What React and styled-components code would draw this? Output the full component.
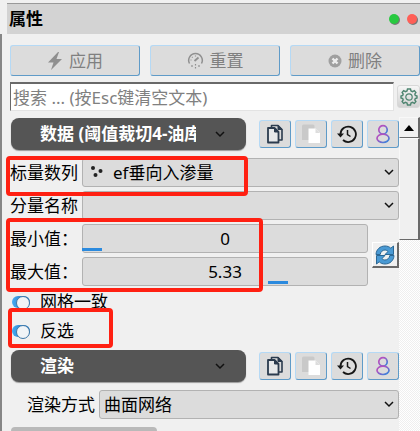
import React, { useState } from "react";
import styled, { createGlobalStyle } from "styled-components";

const GlobalStyle = createGlobalStyle`
  * {
    box-sizing: border-box;
  }

  html,
  body,
  #root {
    height: 100%;
  }

  body {
    margin: 0;
    overflow: hidden;
    background: #f0f0f0;
    color: #000;
    font-family: "Noto Sans", "Noto Sans CJK SC", sans-serif;
    font-size: 17px;
    line-height: 24px;
  }

  button,
  input,
  select {
    font: inherit;
    color: inherit;
  }
`;

const Dock = styled.main`
  display: flex;
  flex-direction: column;
  height: 100%;
  padding-top: 3px;
`;

const TitleBar = styled.header`
  display: flex;
  align-items: center;
  flex: none;
  height: 31px;
  margin-left: 7px;
  padding: 0 3px 0 2px;
  border-top: 1px solid #999;
  background: #d3d3d3;
`;

const Title = styled.h1`
  flex: 1;
  margin: 0;
  font-size: 17px;
  font-weight: bold;
`;

const WindowButton = styled.button`
  width: 10px;
  height: 10px;
  margin-left: 8px;
  padding: 0;
  border: none;
  border-radius: 50%;
  background: ${(props) => props.$color};
  box-shadow: 1px 1px 0 #777;
`;

const Frame = styled.div`
  display: flex;
  flex-direction: column;
  flex: 1;
  min-height: 0;
  padding-top: 11px;
  border-left: 2px solid #868686;
`;

const Actions = styled.div`
  display: flex;
  flex: none;
  gap: 10px;
  margin-left: 8px;
`;

const RaisedButton = styled.button`
  display: flex;
  align-items: center;
  justify-content: center;
  padding: 0;
  border: 1px solid;
  border-color: #b5d9f5 #5f9bc8 #5f9bc8 #b5d9f5;
  border-radius: 3px;
  background: #dcdcdc;
`;

const ActionButton = styled(RaisedButton)`
  flex: 1;
  gap: 6px;
  height: 31px;
  color: #808080;
`;

const SearchRow = styled.div`
  display: flex;
  align-items: center;
  flex: none;
  gap: 3px;
  margin: 6px 0 0 8px;
`;

const SearchInput = styled.input`
  flex: 1;
  min-width: 0;
  height: 29px;
  padding: 0 2px;
  border: 1px solid #e3e3e3;
  border-top: 2px solid #696969;
  border-left: 1px solid #696969;
  background: #fff;

  &::placeholder {
    color: #808080;
    opacity: 1;
  }
`;

const GearButton = styled.button`
  display: flex;
  align-items: center;
  justify-content: center;
  width: 23px;
  height: 23px;
  padding: 0;
  border: 1px solid #d8d8d8;
  border-radius: 3px;
  background: linear-gradient(#f6f6f6, #d2d2d2);
`;

const ScrollArea = styled.div`
  display: flex;
  flex: 1;
  min-height: 0;
  margin-top: 6px;
`;

const Content = styled.div`
  flex: 1;
  min-width: 0;
  padding-left: 8px;
  overflow: hidden;
`;

const ScrollBar = styled.div`
  display: flex;
  flex-direction: column;
  width: 21px;
  background: repeating-conic-gradient(#fff 0% 25%, #efefef 0% 50%) 0 0 / 2px 2px;
`;

const ScrollPart = styled.button`
  display: flex;
  align-items: center;
  justify-content: center;
  flex: none;
  height: ${(props) => props.$height}px;
  padding: 0;
  border: 1px solid;
  border-color: #f8f8f8 #696969 #696969 #f8f8f8;
  border-right-width: 2px;
  background: #f0f0f0;
`;

const SectionBar = styled.div`
  display: flex;
  align-items: center;
  gap: 4px;
  height: 34px;
`;

const SectionToggle = styled.button`
  display: flex;
  align-items: center;
  flex: 1;
  min-width: 0;
  height: 32px;
  margin: 0 9px 0 1px;
  padding: 0 20px 0 29px;
  border: none;
  border-radius: 8px;
  background: #555;
  box-shadow: 0 1px 1px #999;
  color: #fff;
  font-weight: bold;
  text-align: left;
`;

const SectionName = styled.span`
  flex: 1;
  margin-right: 18px;
  overflow: hidden;
  white-space: nowrap;
`;

const ToolButton = styled(RaisedButton)`
  flex: none;
  width: 32px;
  height: 28px;
`;

const Rows = styled.div`
  display: flex;
  flex-direction: column;
  gap: 4px;
  padding-top: 7px;
`;

const Row = styled.div`
  position: relative;
  display: flex;
  align-items: center;
  height: 29px;
  padding-left: ${(props) => props.$indent || 0}px;
`;

const Label = styled.label`
  flex: none;
  width: 72px;
  white-space: nowrap;
`;

const SelectBox = styled.div`
  position: relative;
  flex: 1;
  min-width: 0;
  height: 29px;
`;

const Select = styled.select`
  width: 100%;
  height: 100%;
  padding: 0 24px 0 ${(props) => props.$left}px;
  border: 1px solid #b2b2b2;
  border-radius: 3px;
  background: #dcdcdc;
  appearance: none;
`;

const SelectArrow = styled.span`
  position: absolute;
  top: 8px;
  right: 4px;
  display: flex;
  pointer-events: none;
`;

const PointsMark = styled.span`
  position: absolute;
  top: 7px;
  left: 8px;
  display: flex;
  pointer-events: none;
`;

const RangeGroup = styled.div`
  position: relative;
  display: flex;
  align-items: center;
  gap: 4px;
`;

const RangeRows = styled.div`
  display: flex;
  flex-direction: column;
  flex: 1;
  gap: 4px;
`;

const ValueBox = styled.div`
  position: relative;
  flex: 1;
  height: 29px;
`;

const ValueInput = styled.input`
  width: 100%;
  height: 100%;
  padding: 0;
  border: 1px solid #b2b2b2;
  border-radius: 3px;
  background: #dcdcdc;
  text-align: center;
`;

const ValueBar = styled.span`
  position: absolute;
  bottom: 2px;
  width: 20px;
  height: 3px;
  background: #2b8ade;
`;

const RefreshButton = styled.button`
  display: flex;
  align-items: center;
  justify-content: center;
  width: 27px;
  height: 26px;
  padding: 0;
  border: 1px solid;
  border-color: #fff #696969 #696969 #fff;
  border-right-width: 2px;
  border-bottom-width: 2px;
  background: #f0f0f0;
`;

const Checks = styled.div`
  padding: 1px 0 4px;
`;

const Check = styled.label`
  display: flex;
  align-items: center;
  gap: 10px;
`;

const Switch = styled.input`
  position: relative;
  width: 18px;
  height: 12px;
  margin: 0 0 0 2px;
  border-radius: 6px;
  background: linear-gradient(90deg, #45aaf2, #1f6fb5);
  appearance: none;

  &::after {
    content: "";
    position: absolute;
    top: 0;
    right: ${(props) => (props.checked ? 0 : 6)}px;
    width: 12px;
    height: 12px;
    border: 1px solid #3f78a8;
    border-radius: 50%;
    background: #f1f4f7;
  }
`;

const Highlight = styled.span`
  position: absolute;
  z-index: 1;
  top: ${(props) => props.$top}px;
  bottom: ${(props) => props.$bottom}px;
  left: ${(props) => props.$left}px;
  width: ${(props) => props.$width}px;
  border: 4px solid #ff2012;
  border-radius: 4px;
  pointer-events: none;
`;

const Marked = styled.div`
  position: relative;
`;

const NextSection = styled.div`
  width: 146px;
  height: 4px;
  margin: 8px 0 0 1px;
  border-radius: 4px 4px 0 0;
  background: #b9b9b9;
`;

const ChevronIcon = () => (
  <svg width="12" height="12" viewBox="0 0 12 12" fill="none">
    <path d="M2 4l4 4 4-4" stroke="#111" strokeWidth="1.5" />
  </svg>
);

const BoltIcon = () => (
  <svg width="16" height="20" viewBox="0 0 16 20">
    <path d="M11 1L1 11.500h5.500L4 19l11-11H9.500L12 1z" fill="#8f8f8f" />
  </svg>
);

const GaugeIcon = () => (
  <svg width="17" height="17" viewBox="0 0 17 17" fill="none" stroke="#909090">
    <path d="M2.500 11.500A6.800 6.800 0 1 1 14.500 11.500" strokeWidth="1.500" />
    <path d="M7.500 9l4-3.500" strokeWidth="1.800" />
    <path
      d="M3.500 8h1M5 5l.6.6M8.500 3.500v1M5 13v2M8.500 12v1.500M8.500 15v1.500M12 13v2"
      strokeWidth="1.200"
    />
  </svg>
);

const DeleteIcon = () => (
  <svg width="14" height="14" viewBox="0 0 14 14">
    <circle cx="7" cy="7" r="6.500" fill="#a0a0a0" />
    <path d="M4.500 4.500l5 5m0-5l-5 5" stroke="#eee" strokeWidth="2.400" />
  </svg>
);

const GearIcon = () => (
  <svg width="18" height="18" viewBox="0 0 18 18" fill="none" stroke="#4e8570">
    <path
      d="M7.500 1h3l.5 2 1.500.7 1.900-1.100 1.500 1.900-1.100 1.600.5 1.400 1.700.6v1.800l-1.700.6-.5 1.400 1.100 1.600-1.500 1.900-1.900-1.100-1.500.7-.5 2h-3l-.5-2-1.500-.7-1.900 1.100-1.500-1.900 1.100-1.600-.5-1.400-1.700-.6V8.100l1.700-.6.5-1.400L2.100 4.500l1.500-1.900 1.900 1.100L7 3z"
      strokeWidth="1.400"
    />
    <circle cx="9" cy="9" r="3.200" strokeWidth="1.200" />
  </svg>
);

const PointsIcon = () => (
  <svg width="14" height="14" viewBox="0 0 14 14" fill="#222">
    <circle cx="3" cy="3" r="2" />
    <circle cx="10.500" cy="6" r="2" />
    <circle cx="5.500" cy="10" r="2" />
  </svg>
);

const CopyIcon = () => (
  <svg width="20" height="22" viewBox="0 0 20 22" fill="none" stroke="#2b3b4e">
    <path
      d="M6.500 4V2.500h6.500l4 4V17H14"
      strokeWidth="1.600"
      strokeLinejoin="round"
    />
    <path
      d="M3 5h6.500l4 4v10.500H3z"
      fill="#e6e8ea"
      strokeWidth="1.800"
      strokeLinejoin="round"
    />
    <path d="M9.500 5v4h4zM13 2.500v4h4z" fill="#2b3b4e" />
  </svg>
);

const PasteIcon = () => (
  <svg width="20" height="22" viewBox="0 0 20 22">
    <path d="M1 3q0-1.500 1.500-1.500H12q1.500 0 1.500 1.500v14H1z" fill="#c9c9c9" />
    <path d="M7.500 5.500h7l4.500 4.500v10H7.500z" fill="#fff" />
    <path d="M14.500 5.500v4.500h4.500z" fill="#ddd" />
  </svg>
);

const HistoryIcon = () => (
  <svg width="20" height="20" viewBox="0 0 20 20" fill="none" stroke="#161616">
    <path d="M3.500 10A7.700 7.700 0 1 1 6 16" strokeWidth="1.800" />
    <path d="M0 9.500h7L3.500 13.500z" fill="#161616" stroke="none" />
    <path d="M10.500 6v4.500l3 2" strokeWidth="1.500" />
  </svg>
);

const PersonIcon = () => (
  <svg width="16" height="20" viewBox="0 0 16 20" fill="none">
    <defs>
      <linearGradient id="person" x1="0" y1="0" x2="1" y2="1">
        <stop offset="0.300" stopColor="#b052c0" />
        <stop offset="1" stopColor="#268be0" />
      </linearGradient>
    </defs>
    <g stroke="url(#person)" strokeWidth="1.700">
      <circle cx="8" cy="5.800" r="4.200" />
      <ellipse cx="8" cy="14.300" rx="6" ry="4.200" />
    </g>
  </svg>
);

const RefreshIcon = () => (
  <svg width="20" height="20" viewBox="0 0 20 20">
    <g fill="#4a9ad4" stroke="#2b6794" strokeWidth="1" strokeLinejoin="round">
      <path d="M1 9.500C1.200 4.500 5 1 10 1c2.500 0 4.300.8 5.800 2.200L18.500 1v8.500H10l3-3C12 5.500 11 5 10 5 7.500 5 5.500 7 5.200 9.500z" />
      <path d="M19 10.500C18.800 15.500 15 19 10 19c-2.500 0-4.300-.8-5.800-2.200L1.500 19v-8.500H10l-3 3c1 1 2 1.500 3 1.500 2.500 0 4.500-2 4.800-4.500z" />
    </g>
  </svg>
);

function Section({ name }) {
  return (
    <SectionBar>
      <SectionToggle type="button">
        <SectionName>{name}</SectionName>
        <ChevronIcon />
      </SectionToggle>
      <ToolButton type="button" aria-label="复制">
        <CopyIcon />
      </ToolButton>
      <ToolButton type="button" aria-label="粘贴">
        <PasteIcon />
      </ToolButton>
      <ToolButton type="button" aria-label="恢复">
        <HistoryIcon />
      </ToolButton>
      <ToolButton type="button" aria-label="保存">
        <PersonIcon />
      </ToolButton>
    </SectionBar>
  );
}

function Combo({ id, value, icon }) {
  return (
    <SelectBox>
      <Select id={id} $left={icon ? 30 : 4} defaultValue={value}>
        <option value={value}>{value}</option>
      </Select>
      {icon && <PointsMark>{icon}</PointsMark>}
      <SelectArrow>
        <ChevronIcon />
      </SelectArrow>
    </SelectBox>
  );
}

function Value({ id, label, value, position }) {
  return (
    <Row>
      <Label htmlFor={id}>{label}</Label>
      <ValueBox>
        <ValueInput id={id} defaultValue={value} />
        <ValueBar style={{ left: `${position}%` }} />
      </ValueBox>
    </Row>
  );
}

function CheckRow({ label }) {
  const [checked, setChecked] = useState(true);

  return (
    <Row>
      <Check>
        <Switch
          type="checkbox"
          checked={checked}
          onChange={(e) => setChecked(e.target.checked)}
        />
        {label}
      </Check>
    </Row>
  );
}

function App() {
  return (
    <>
      <GlobalStyle />
      <Dock>
        <TitleBar>
          <Title>属性</Title>
          <WindowButton type="button" aria-label="浮动" $color="#28c940" />
          <WindowButton type="button" aria-label="关闭" $color="#ff5f57" />
        </TitleBar>
        <Frame>
          <Actions>
            <ActionButton type="button">
              <BoltIcon />
              应用
            </ActionButton>
            <ActionButton type="button">
              <GaugeIcon />
              重置
            </ActionButton>
            <ActionButton type="button">
              <DeleteIcon />
              删除
            </ActionButton>
          </Actions>
          <SearchRow>
            <SearchInput
              type="text"
              aria-label="搜索"
              placeholder="搜索 ... (按Esc键清空文本)"
            />
            <GearButton type="button" aria-label="高级">
              <GearIcon />
            </GearButton>
          </SearchRow>
          <ScrollArea>
            <Content>
              <Section name="数据 (阈值裁切4-油库)" />
              <Rows>
                <Marked>
                  <Row>
                    <Label htmlFor="scalars">标量数列</Label>
                    <Combo
                      id="scalars"
                      value="ef垂向入渗量"
                      icon={<PointsIcon />}
                    />
                  </Row>
                  <Highlight $top={-2} $bottom={-9} $left={-4} $width={242} />
                </Marked>
                <Row>
                  <Label htmlFor="component">分量名称</Label>
                  <Combo id="component" value="" />
                </Row>
                <RangeGroup>
                  <RangeRows>
                    <Value id="min" label="最小值：" value="0" position={0} />
                    <Value
                      id="max"
                      label="最大值："
                      value="5.33"
                      position={65}
                    />
                  </RangeRows>
                  <RefreshButton type="button" aria-label="重置范围">
                    <RefreshIcon />
                  </RefreshButton>
                  <Highlight $top={-6} $bottom={-6} $left={-4} $width={257} />
                </RangeGroup>
              </Rows>
              <Checks>
                <CheckRow label="网格一致" />
                <Marked>
                  <CheckRow label="反选" />
                  <Highlight $top={-8} $bottom={-3} $left={-2} $width={105} />
                </Marked>
              </Checks>
              <Section name="渲染" />
              <Rows>
                <Row $indent={17}>
                  <Label htmlFor="representation">渲染方式</Label>
                  <Combo id="representation" value="曲面网络" />
                </Row>
              </Rows>
              <NextSection />
            </Content>
            <ScrollBar>
              <ScrollPart type="button" aria-label="向上" $height={21}>
                <svg width="10" height="6" viewBox="0 0 10 6">
                  <path d="M5 0l5 6H0z" />
                </svg>
              </ScrollPart>
              <ScrollPart type="button" aria-label="滚动" $height={102} />
            </ScrollBar>
          </ScrollArea>
        </Frame>
      </Dock>
    </>
  );
}

export default App;
